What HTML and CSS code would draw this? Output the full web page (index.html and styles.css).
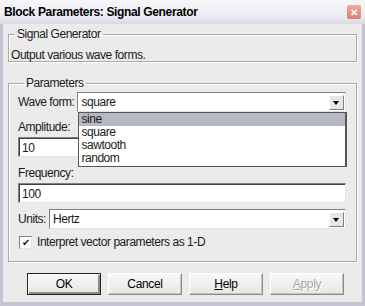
FILE: index.html
```html
<!DOCTYPE html>
<html lang="en">
<head>
  <meta charset="UTF-8">
  <title>Block Parameters: Signal Generator</title>
  <link rel="stylesheet" href="styles.css">
</head>
<body>
  <div class="window">
    <div class="titlebar">
      <span class="title">Block Parameters: Signal Generator</span>
      <span class="close">&#x2715;</span>
    </div>
    <div class="content">
      <fieldset class="group desc">
        <legend>Signal Generator</legend>
        <p>Output various wave forms.</p>
      </fieldset>

      <fieldset class="group params">
        <legend>Parameters</legend>
        <div class="row">
          <span class="label">Wave form:</span>
          <div class="combo wide">
            <span class="value">square</span>
            <span class="arrow"></span>
            <ul class="droplist">
              <li class="selected">sine</li>
              <li>square</li>
              <li>sawtooth</li>
              <li>random</li>
            </ul>
          </div>
        </div>
        <div class="label amp">Amplitude:</div>
        <div class="field">10</div>
        <div class="label freq">Frequency:</div>
        <div class="field">100</div>
        <div class="row units">
          <span class="label">Units:</span>
          <div class="combo wide">
            <span class="value">Hertz</span>
            <span class="arrow"></span>
          </div>
        </div>
        <label class="check">
          <span class="box">&#x2714;</span>
          Interpret vector parameters as 1-D
        </label>
      </fieldset>

      <div class="buttons">
        <button class="default">OK</button>
        <button>Cancel</button>
        <button><u>H</u>elp</button>
        <button class="disabled"><u>A</u>pply</button>
      </div>
    </div>
  </div>
</body>
</html>
```

FILE: styles.css
```css
body {
  margin: 0;
  font-family: "Liberation Sans", Arial, sans-serif;
  font-size: 12px;
  letter-spacing: -0.45px;
  color: #1a1a1a;
  background: #fff;
}

.window {
  width: 365px;
  height: 306px;
  box-sizing: border-box;
  background: #ebebeb;
  border: 3px solid #c4c4d4;
  border-top: none;
  border-bottom-width: 4px;
}

.titlebar {
  height: 24px;
  margin: 0 -3px;
  padding: 0 4px 0 4px;
  display: flex;
  align-items: center;
  justify-content: space-between;
  background: linear-gradient(#f6f6fa, #ebebf2 70%, #d8d8e4);
}

.title {
  font-weight: bold;
  font-size: 12px;
  letter-spacing: -0.35px;
  color: #000;
}

.close {
  width: 14px;
  height: 14px;
  background: linear-gradient(#f0a8a0, #e07c74);
  color: #fff;
  font-size: 10px;
  font-weight: bold;
  display: flex;
  align-items: center;
  justify-content: center;
  border-radius: 2px;
}

.content {
  padding: 0 5px 0 5px;
}

.group {
  margin: 0;
  border: 1px solid #a8a8a8;
  box-shadow: 1px 1px 0 #fff, inset 1px 1px 0 #fff;
  padding: 0;
}

.group legend {
  padding: 0 2px;
  margin-left: 6px;
  line-height: 14px;
}

.desc {
  margin-top: 3px;
  height: 35px;
  box-sizing: border-box;
}

.desc p {
  margin: 7px 0 0 2px;
}

.params {
  margin-top: 14px;
  height: 186px;
  box-sizing: border-box;
  padding: 2px 10px 0 9px;
}

.row {
  display: flex;
  align-items: center;
}

.row .label {
  margin-right: 3px;
}

.combo {
  position: relative;
  height: 20px;
  box-sizing: border-box;
  background: #fff;
  border: 1px solid;
  border-color: #808080 #e4e4e4 #e4e4e4 #808080;
  display: flex;
  align-items: center;
}

.combo.wide {
  flex: 1;
}

.combo .value {
  flex: 1;
  padding-left: 3px;
}

.arrow {
  width: 15px;
  height: 15px;
  margin-right: 1px;
  background: #e6e6e6;
  border: 1px solid;
  border-color: #fff #808080 #808080 #fff;
  box-sizing: border-box;
  position: relative;
}

.arrow::after {
  content: "";
  position: absolute;
  left: 3px;
  top: 5px;
  border-left: 3.5px solid transparent;
  border-right: 3.5px solid transparent;
  border-top: 4px solid #000;
}

.droplist {
  position: absolute;
  left: 0;
  top: 19px;
  right: -2px;
  margin: 0;
  padding: 0 0 1px 0;
  list-style: none;
  background: #fff;
  border: 1px solid #555;
  border-right-width: 2px;
  z-index: 2;
}

.droplist li {
  height: 13px;
  line-height: 13px;
  padding-left: 2px;
}

.droplist li.selected {
  background: #b6b8c4;
}

.label.amp {
  margin-top: 7px;
  line-height: 16px;
}

.field {
  height: 20px;
  box-sizing: border-box;
  background: #fff;
  border: 1px solid;
  border-color: #808080 #e4e4e4 #e4e4e4 #808080;
  box-shadow: inset 1px 1px 0 #404040;
  padding: 3px 0 0 3px;
  margin-top: 2px;
}

.label.freq {
  margin-top: 8px;
  line-height: 16px;
}

.units {
  margin-top: 6px;
}

.check {
  display: flex;
  align-items: center;
  margin-top: 6px;
  gap: 5px;
  height: 14px;
}

.check .box {
  width: 13px;
  height: 13px;
  box-sizing: border-box;
  background: #fff;
  border: 1px solid;
  border-color: #808080 #e4e4e4 #e4e4e4 #808080;
  font-size: 10px;
  line-height: 11px;
  text-align: center;
  margin-left: 1px;
}

.buttons {
  display: flex;
  gap: 7px;
  padding: 11px 0 0 19px;
}

.buttons button {
  width: 74px;
  height: 22px;
  font-family: "Liberation Sans", Arial, sans-serif;
  font-size: 12px;
  letter-spacing: -0.35px;
  color: #000;
  background: linear-gradient(#f8f8f8, #e6e6e6);
  border: 1px solid;
  border-color: #fff #8a8a8a #8a8a8a #fff;
  box-shadow: inset -1px -1px 0 #c4c4c4;
  padding: 0;
}

.buttons .default {
  border: 1px solid #222;
  box-shadow: inset 1px 1px 0 #fff, inset -2px -2px 0 #8a8a8a;
}

.buttons .disabled {
  color: #a8a8a8;
  text-shadow: 1px 1px 0 #fff;
}
```
